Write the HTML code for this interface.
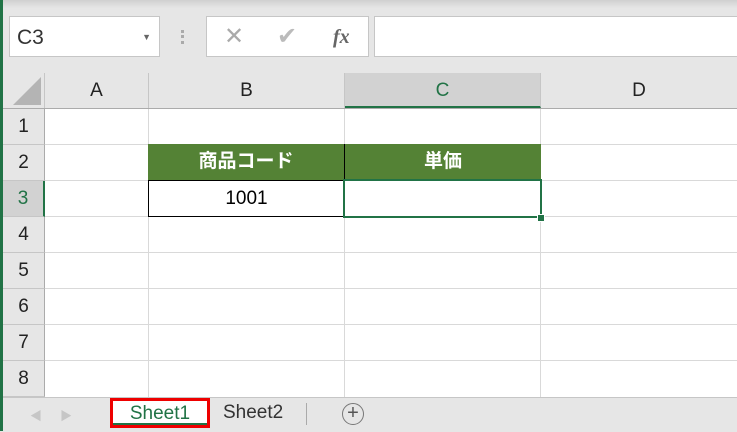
<!DOCTYPE html><html><head><style>
body{margin:0;width:737px;height:431px;overflow:hidden;background:#e6e6e6;font-family:"Liberation Sans","Noto Sans CJK JP",sans-serif;position:relative}
.a{position:absolute}
.ch{position:absolute;top:73px;height:35px;text-align:center;line-height:35px;font-size:19px;color:#222;border-right:1px solid #c6c6c6;box-sizing:border-box}
.rh{position:absolute;left:3px;width:42px;text-align:center;font-size:19px;color:#222;border-bottom:1px solid #c6c6c6;box-sizing:border-box;background:#e6e6e6;border-right:1px solid #ababab}
.vl{position:absolute;top:109px;height:288px;width:1px;background:#d9d9d9}
.hl{position:absolute;left:45px;width:692px;height:1px;background:#d9d9d9}
</style></head><body>
<div class="a" style="left:0;top:0;width:3px;height:431px;background:#217346"></div>
<div class="a" style="left:3px;top:0;width:734px;height:8px;background:linear-gradient(#d0d0d0,#e6e6e6)"></div>
<div class="a" style="left:9px;top:16px;width:151px;height:41px;background:#fff;border:1px solid #c6c6c6;box-sizing:border-box;font-size:21px;line-height:42px;padding-left:7px;color:#333">C3<span style="position:absolute;right:8px;top:-1px;font-size:9px;color:#666">▼</span></div>
<div class="a" style="left:181px;top:30px;width:3px;height:14px;border-left:3px dotted #aaa"></div>
<div class="a" style="left:206px;top:16px;width:163px;height:41px;background:#fff;border:1px solid #c6c6c6;box-sizing:border-box;color:#aaa;font-size:24px;line-height:40px">
<span class="a" style="left:17px">✕</span><span class="a" style="left:70px;color:#bbb">✔</span><span class="a" style="left:126px;font-family:'Liberation Serif',serif;font-style:italic;font-weight:bold;font-size:20px;color:#666">fx</span></div>
<div class="a" style="left:374px;top:16px;width:370px;height:41px;background:#fff;border:1px solid #c6c6c6;box-sizing:border-box"></div>
<div class="a" style="left:3px;top:73px;width:42px;height:35px;border-right:1px solid #c6c6c6;box-sizing:border-box"></div>
<svg class="a" style="left:12px;top:77px" width="30" height="28"><polygon points="29,0 29,28 1,28" fill="#b4b4b4"/></svg>
<div class="ch" style="left:45px;width:104px">A</div>
<div class="ch" style="left:149px;width:196px">B</div>
<div class="ch" style="left:345px;width:196px;background:#d2d2d2;color:#217346;border-bottom:2px solid #217346">C</div>
<div class="ch" style="left:541px;width:196px;border-right:none">D</div>
<div class="a" style="left:3px;top:108px;width:734px;height:1px;background:#ababab"></div>
<div class="a" style="left:45px;top:109px;width:692px;height:288px;background:#fff"></div>
<div class="vl" style="left:148px"></div><div class="vl" style="left:344px"></div><div class="vl" style="left:540px"></div>
<div class="hl" style="top:144px"></div><div class="hl" style="top:180px"></div><div class="hl" style="top:216px"></div><div class="hl" style="top:252px"></div><div class="hl" style="top:288px"></div><div class="hl" style="top:324px"></div><div class="hl" style="top:360px"></div>
<div class="rh" style="top:109px;height:36px;line-height:36px">1</div>
<div class="rh" style="top:145px;height:36px;line-height:36px">2</div>
<div class="rh" style="top:181px;height:36px;line-height:36px;background:#d2d2d2;color:#217346;border-right:2px solid #217346">3</div>
<div class="rh" style="top:217px;height:36px;line-height:36px">4</div>
<div class="rh" style="top:253px;height:36px;line-height:36px">5</div>
<div class="rh" style="top:289px;height:36px;line-height:36px">6</div>
<div class="rh" style="top:325px;height:36px;line-height:36px">7</div>
<div class="rh" style="top:361px;height:36px;line-height:36px">8</div>
<div class="a" style="left:148px;top:144px;width:393px;height:36px;background:#548235;color:#fff;font-weight:bold;font-size:19px;line-height:36px">
<span class="a" style="left:0;width:196px;text-align:center">商品コード</span><span class="a" style="left:196px;width:1px;height:36px;background:#000"></span><span class="a" style="left:197px;width:196px;text-align:center">単価</span></div>
<div class="a" style="left:148px;top:180px;width:197px;height:37px;border:1px solid #000;box-sizing:border-box;background:#fff;text-align:center;line-height:35px;font-size:19px">1001</div>
<div class="a" style="left:343px;top:179px;width:199px;height:39px;border:2px solid #217346;box-sizing:border-box"></div>
<div class="a" style="left:537px;top:214px;width:6px;height:6px;background:#217346;border:1px solid #fff"></div>
<div class="a" style="left:3px;top:397px;width:734px;height:34px;background:#e6e6e6;border-top:1px solid #c6c6c6"></div>
<div class="a" style="left:30px;top:407px;color:#c6c6c6;font-size:12px">◀</div><div class="a" style="left:60px;top:407px;color:#c6c6c6;font-size:12px">▶</div>
<div class="a" style="left:110px;top:398px;width:100px;height:30px;border:3px solid #e00;box-sizing:border-box;background:#fff;color:#217346;font-size:19px;text-align:center;line-height:26px">Sheet1<div class="a" style="left:0;right:0;bottom:0;height:2px;background:#217346"></div></div>
<div class="a" style="left:223px;top:402px;font-size:19px;color:#333">Sheet2</div>
<div class="a" style="left:306px;top:403px;width:1px;height:22px;background:#aaa"></div>
<div class="a" style="left:342px;top:403px;width:20px;height:20px;border:1.5px solid #777;border-radius:50%;text-align:center;line-height:19px;font-size:20px;color:#555">+</div>
</body></html>
